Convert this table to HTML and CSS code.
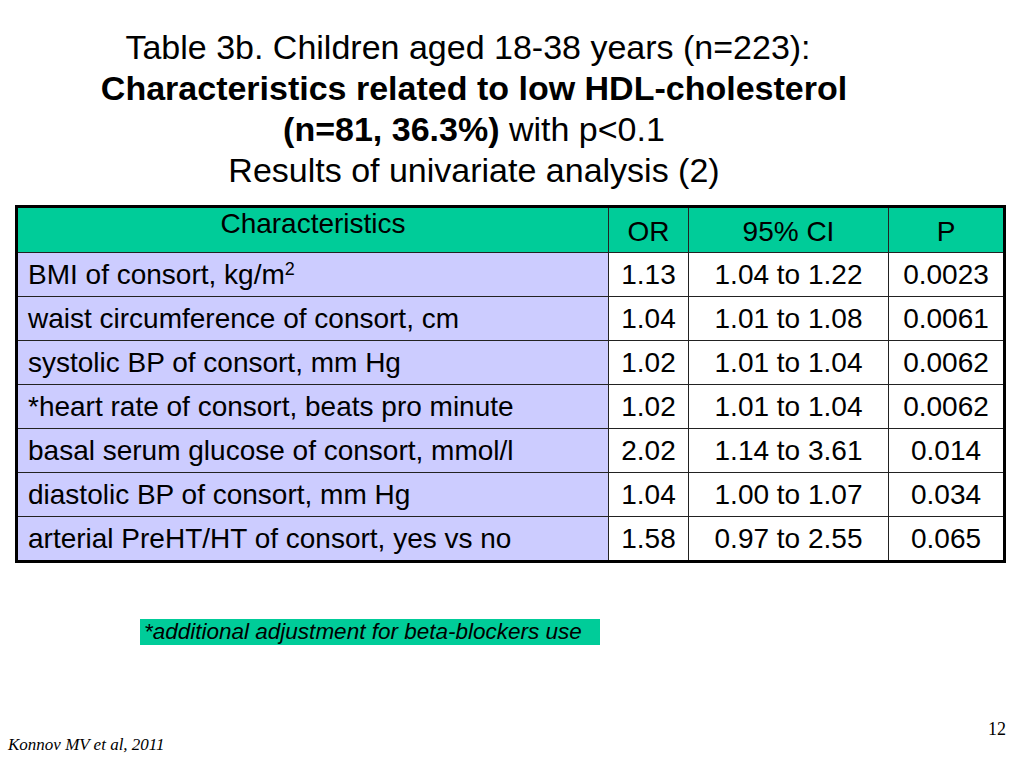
FILE: index.html
```html
<!DOCTYPE html>
<html>
<head>
<meta charset="utf-8">
<link rel="stylesheet" href="styles.css">
</head>
<body>
<div class="slide">
  <header class="title">
    <div class="line first">Table 3b. Children aged 18-38 years (n=223):</div>
    <div class="line bold">Characteristics related to low HDL-cholesterol</div>
    <div class="line"><b>(n=81, 36.3%)</b> with p&lt;0.1</div>
    <div class="line">Results of univariate analysis (2)</div>
  </header>
  <table class="data">
    <colgroup>
      <col class="c1"><col class="c2"><col class="c3"><col class="c4">
    </colgroup>
    <thead>
      <tr><th class="hchar">Characteristics</th><th>OR</th><th>95% CI</th><th>P</th></tr>
    </thead>
    <tbody>
      <tr><td class="name">BMI of consort, kg/m<sup>2</sup></td><td>1.13</td><td>1.04 to 1.22</td><td>0.0023</td></tr>
      <tr><td class="name">waist circumference of consort, cm</td><td>1.04</td><td>1.01 to 1.08</td><td>0.0061</td></tr>
      <tr><td class="name">systolic BP of consort, mm Hg</td><td>1.02</td><td>1.01 to 1.04</td><td>0.0062</td></tr>
      <tr><td class="name">*heart rate of consort, beats pro minute</td><td>1.02</td><td>1.01 to 1.04</td><td>0.0062</td></tr>
      <tr><td class="name">basal serum glucose of consort, mmol/l</td><td>2.02</td><td>1.14 to 3.61</td><td>0.014</td></tr>
      <tr><td class="name">diastolic BP of consort, mm Hg</td><td>1.04</td><td>1.00 to 1.07</td><td>0.034</td></tr>
      <tr><td class="name">arterial PreHT/HT of consort, yes vs no</td><td>1.58</td><td>0.97 to 2.55</td><td>0.065</td></tr>
    </tbody>
  </table>
  <div class="note-row"><span class="note">*additional adjustment for beta-blockers use</span></div>
  <footer class="foot">
    <span class="cite">Konnov MV et al, 2011</span>
    <span class="page">12</span>
  </footer>
</div>
</body>
</html>
```
FILE: styles.css
```css
html, body {
  margin: 0;
  padding: 0;
  background: #fff;
}
.slide {
  width: 1024px;
  height: 768px;
  position: relative;
  font-family: "Liberation Sans", Arial, sans-serif;
  color: #000;
  display: flex;
  flex-direction: column;
}
.title {
  padding-top: 27px;
  text-align: center;
  font-size: 34px;
  line-height: 41px;
  margin-left: -76px;
}
.title .line { white-space: nowrap; }
.title .first { padding-right: 12px; }
.title .bold { font-weight: bold; }
.data {
  margin: 14px 0 0 15px;
  width: 988px;
  border-collapse: collapse;
  border: 3px solid #000;
  table-layout: fixed;
  font-size: 28px;
}
.c1 { width: 592px; }
.c2 { width: 80px; }
.c3 { width: 200px; }
.c4 { width: 116px; }
.data th, .data td {
  border: 1px solid #222;
  height: 43px;
  padding: 0;
  text-align: center;
  font-weight: normal;
  background: #fff;
  white-space: nowrap;
}
.data th {
  background: #00cc99;
  height: 41px;
  padding-top: 3px;
}
.data th.hchar {
  vertical-align: top;
  padding-top: 0;
}
.data td.name {
  background: #ccccff;
  text-align: left;
  padding-left: 10px;
}
sup {
  font-size: 18px;
  line-height: 0;
  vertical-align: 9px;
}
.note-row {
  margin-top: 56px;
  padding-left: 140px;
}
.note {
  display: inline-block;
  background: #00cc99;
  font-style: italic;
  font-size: 22.5px;
  line-height: 26px;
  width: 456px;
  padding-left: 4px;
  white-space: nowrap;
}
.foot {
  flex: 1;
  display: flex;
  justify-content: space-between;
  align-items: flex-end;
  font-family: "Liberation Serif", "Times New Roman", serif;
  padding: 0 18px 13px 8px;
}
.cite {
  font-style: italic;
  font-size: 17px;
}
.page {
  font-size: 18px;
  margin-bottom: 15px;
}
```
